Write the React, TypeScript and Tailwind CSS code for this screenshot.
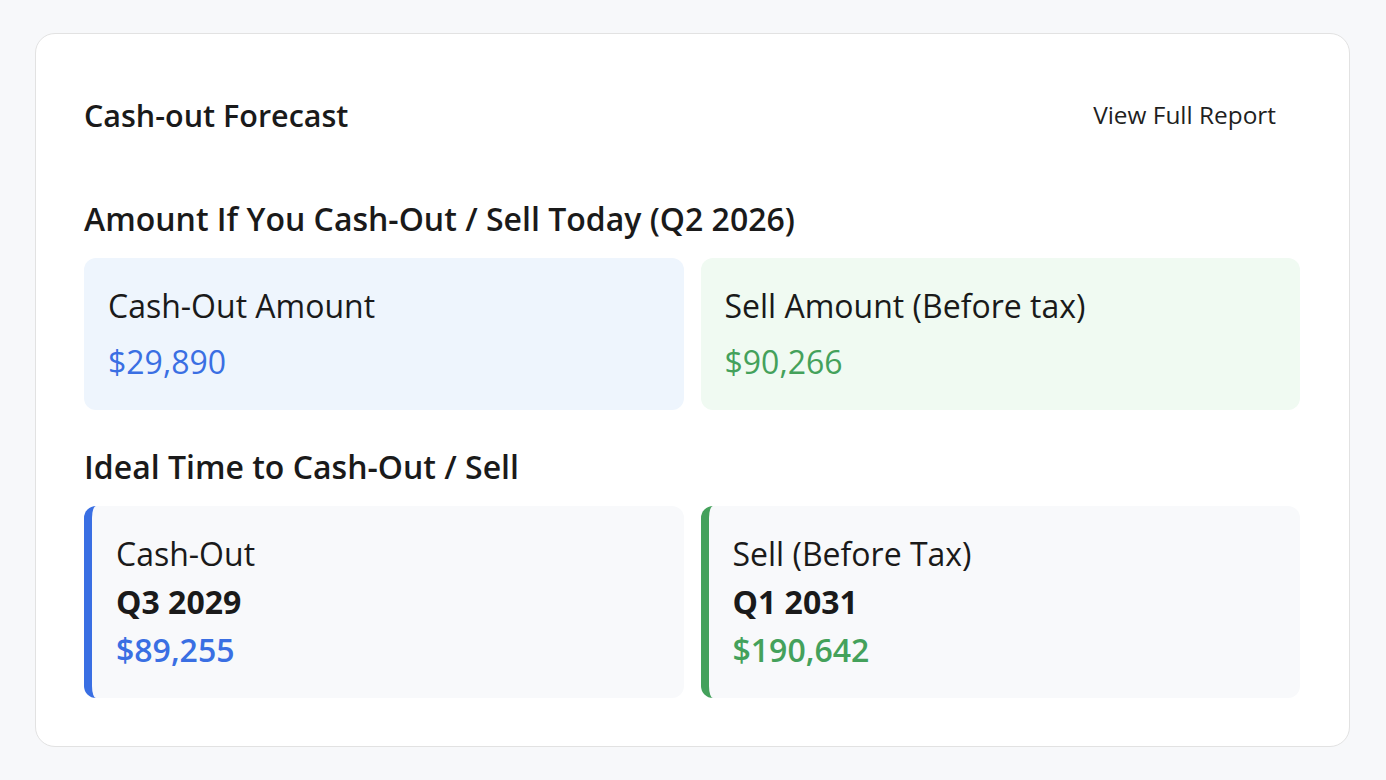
export default function App() {
  const font = { fontFamily: '"Open Sans", "Noto Sans", sans-serif' };
  return (
    <div className="min-h-screen bg-[#f7f8fa] pl-[35px] pr-[36px] pt-[33px] pb-[34px]" style={font}>
      <div className="rounded-[20px] border border-[#e2e2e2] bg-white pl-12 pr-[49px] pt-12 pb-12">
        <div className="flex h-[66px] items-center justify-between">
          <h2 className="text-[30.5px] font-semibold leading-[48px] text-[#1a1a1a]">Cash-out Forecast</h2>
          <button className="px-6 text-[24.4px] leading-[36px] text-[#1f1f1f]">View Full Report</button>
        </div>

        <section className="mt-[47px]">
          <h3 className="mb-[15px] text-[32px] font-semibold leading-[48px] text-[#1a1a1a]">
            Amount If You Cash-Out / Sell Today (Q2 2026)
          </h3>
          <div className="grid grid-cols-2 gap-[17px]">
            <div className="rounded-[12px] bg-[#eef5fd] p-6">
              <div className="mb-2 text-[32px] leading-[48px] text-[#1a1a1a]">Cash-Out Amount</div>
              <div className="text-[32px] leading-[48px] text-[#3a6fe3]">$29,890</div>
            </div>
            <div className="rounded-[12px] bg-[#f0faf2] p-6">
              <div className="mb-2 text-[32px] leading-[48px] text-[#1a1a1a]">Sell Amount (Before tax)</div>
              <div className="text-[32px] leading-[48px] text-[#44a15b]">$90,266</div>
            </div>
          </div>
        </section>

        <section className="mt-[33px]">
          <h3 className="mb-[15px] text-[32px] font-semibold leading-[48px] text-[#1a1a1a]">
            Ideal Time to Cash-Out / Sell
          </h3>
          <div className="grid grid-cols-2 gap-[17px]">
            <div className="rounded-[12px] border-l-[8px] border-[#3a6fe3] bg-[#f8f9fb] p-6">
              <div className="text-[32px] leading-[48px] text-[#1a1a1a]">Cash-Out</div>
              <div className="text-[32px] font-bold leading-[48px] text-[#1a1a1a]">Q3 2029</div>
              <div className="text-[32px] font-semibold leading-[48px] text-[#3a6fe3]">$89,255</div>
            </div>
            <div className="rounded-[12px] border-l-[8px] border-[#44a15b] bg-[#f8f9fb] p-6">
              <div className="text-[32px] leading-[48px] text-[#1a1a1a]">Sell (Before Tax)</div>
              <div className="text-[32px] font-bold leading-[48px] text-[#1a1a1a]">Q1 2031</div>
              <div className="text-[32px] font-semibold leading-[48px] text-[#44a15b]">$190,642</div>
            </div>
          </div>
        </section>
      </div>
    </div>
  );
}
